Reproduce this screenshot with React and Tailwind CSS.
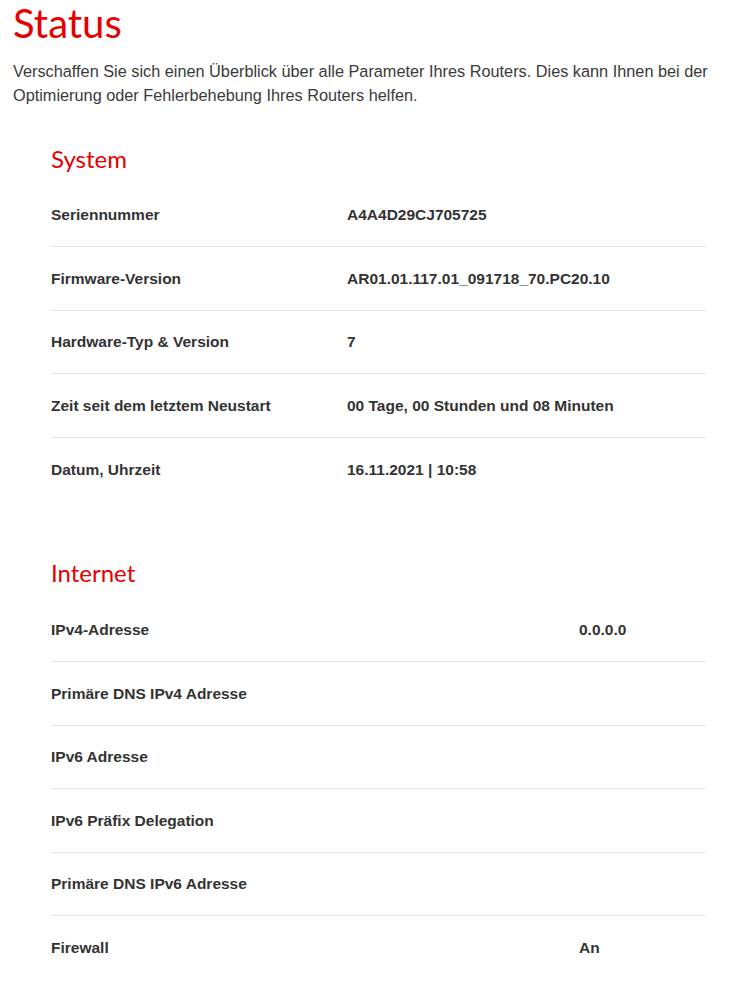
import React from "react";

const systemRows = [
  ["Seriennummer", "A4A4D29CJ705725"],
  ["Firmware-Version", "AR01.01.117.01_091718_70.PC20.10"],
  ["Hardware-Typ & Version", "7"],
  ["Zeit seit dem letztem Neustart", "00 Tage, 00 Stunden und 08 Minuten"],
  ["Datum, Uhrzeit", "16.11.2021 | 10:58"],
];

const internetRows = [
  ["IPv4-Adresse", "0.0.0.0"],
  ["Primäre DNS IPv4 Adresse", ""],
  ["IPv6 Adresse", ""],
  ["IPv6 Präfix Delegation", ""],
  ["Primäre DNS IPv6 Adresse", ""],
  ["Firewall", "An"],
];

function InfoTable({ rows, labelWidth }) {
  return (
    <div>
      {rows.map(([label, value], i) => (
        <div
          key={label}
          className={
            "flex items-center h-[63.5px] text-[15.5px] font-bold text-[#333]" +
            (i < rows.length - 1 ? " border-b border-[#e5e5e5]" : "")
          }
        >
          <div className={labelWidth}>{label}</div>
          <div>{value}</div>
        </div>
      ))}
    </div>
  );
}

export default function App() {
  return (
    <div className="bg-white min-h-[999px] px-[13px] font-['Liberation_Sans',Arial,sans-serif]">
      <h1 className="font-['Lato',sans-serif] text-[#e60000] text-[40px] leading-[48px] -mt-[1px]">
        Status
      </h1>
      <p className="mt-[12px] text-[16.3px] leading-[24px] text-[#3a3a3a]">
        Verschaffen Sie sich einen Überblick über alle Parameter Ihres Routers. Dies kann Ihnen bei der
        Optimierung oder Fehlerbehebung Ihres Routers helfen.
      </p>

      <section className="ml-[38px] w-[655px] mt-[37px]">
        <h2 className="font-['Lato',sans-serif] text-[#e60000] text-[24px] leading-[30px] mb-[9.5px]">
          System
        </h2>
        <InfoTable rows={systemRows} labelWidth="w-[296px]" />
      </section>

      <section className="ml-[38px] w-[655px] mt-[57px]">
        <h2 className="font-['Lato',sans-serif] text-[#e60000] text-[24px] leading-[30px] mb-[10.5px]">
          Internet
        </h2>
        <InfoTable rows={internetRows} labelWidth="w-[528px]" />
      </section>
    </div>
  );
}
